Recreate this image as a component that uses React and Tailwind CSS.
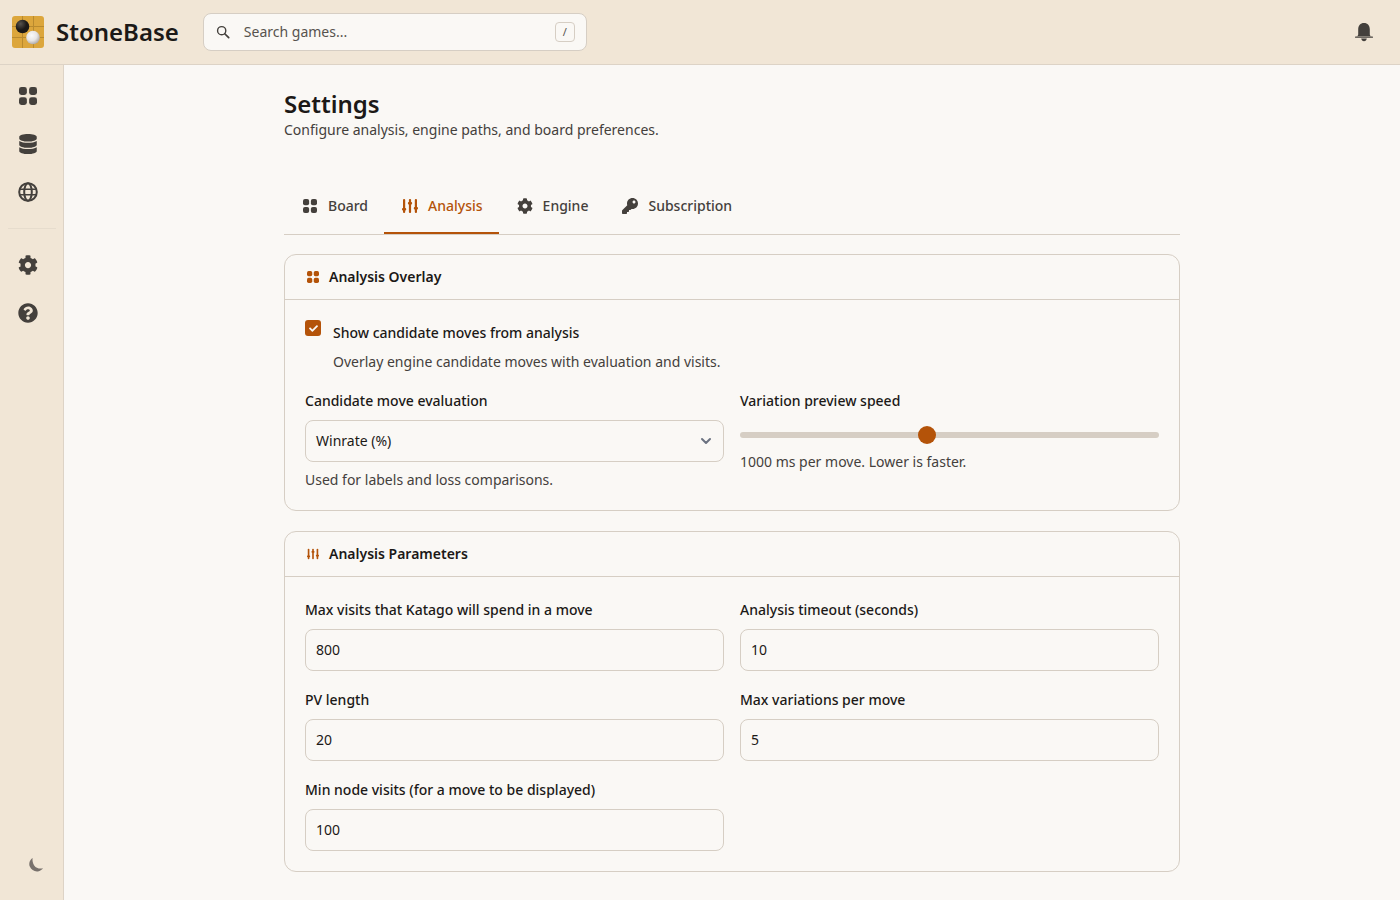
import { FaCheck, FaCog, FaDatabase, FaKey, FaQuestionCircle } from "react-icons/fa";

const Logo = () => (
  <svg width="32" height="32" viewBox="0 0 32 32">
    <defs>
      <radialGradient id="blackStone" cx="35%" cy="30%" r="75%">
        <stop offset="0%" stopColor="#57534e" />
        <stop offset="60%" stopColor="#1c1917" />
      </radialGradient>
      <radialGradient id="whiteStone" cx="40%" cy="35%" r="70%">
        <stop offset="0%" stopColor="#fafafa" />
        <stop offset="55%" stopColor="#e7e5e4" />
        <stop offset="100%" stopColor="#a8a29e" />
      </radialGradient>
    </defs>
    <rect x="0" y="0" width="32" height="32" rx="3" fill="#dca63c" />
    <path d="M0 10.5H32M0 21.5H32M10.5 0V32M21.5 0V32" stroke="#b98a2e" strokeWidth="1" />
    <circle cx="10.5" cy="10.5" r="6.8" fill="url(#blackStone)" />
    <circle cx="21" cy="21.5" r="6.8" fill="url(#whiteStone)" />
  </svg>
);

const GridIcon = ({ className }) => (
  <svg viewBox="0 0 16 16" fill="currentColor" className={className}>
    <rect x="0" y="0" width="7" height="7" rx="2.2" />
    <rect x="9" y="0" width="7" height="7" rx="2.2" />
    <rect x="0" y="9" width="7" height="7" rx="2.2" />
    <rect x="9" y="9" width="7" height="7" rx="2.2" />
  </svg>
);

const SlidersIcon = ({ className }) => (
  <svg viewBox="0 0 16 16" fill="currentColor" className={className}>
    <rect x="1" y="1" width="2.2" height="14" rx="1" />
    <rect x="6.9" y="1" width="2.2" height="14" rx="1" />
    <rect x="12.8" y="1" width="2.2" height="14" rx="1" />
    <rect x="0" y="10" width="4.2" height="2.4" rx="1" />
    <rect x="5.9" y="4" width="4.2" height="2.4" rx="1" />
    <rect x="11.8" y="9" width="4.2" height="2.4" rx="1" />
  </svg>
);

const GlobeIcon = ({ className }) => (
  <svg viewBox="0 0 20 20" fill="none" stroke="currentColor" strokeWidth="2" className={className}>
    <circle cx="10" cy="10" r="8.8" />
    <ellipse cx="10" cy="10" rx="3.8" ry="8.8" />
    <path d="M1.5 7.2H18.5M1.5 12.8H18.5" strokeWidth="1.6" />
  </svg>
);

const SearchIcon = ({ className }) => (
  <svg viewBox="0 0 16 16" fill="none" stroke="currentColor" strokeWidth="1.6" className={className}>
    <circle cx="6.5" cy="6.5" r="4.7" />
    <path d="M10 10L14.5 14.5" strokeWidth="2" strokeLinecap="round" />
  </svg>
);

const BellIcon = ({ className }) => (
  <svg viewBox="0 0 20 20" fill="currentColor" className={className}>
    <path d="M10 1C6.3 1 4.2 3.7 4.2 7.2V12.5C4.2 13.2 3.8 13.8 3 14.2H17C16.2 13.8 15.8 13.2 15.8 12.5V7.2C15.8 3.7 13.7 1 10 1Z" />
    <rect x="1" y="14.6" width="18" height="1.2" rx="0.6" />
    <path d="M7.2 16.6H12.8C12.6 18.2 11.4 19.2 10 19.2S7.4 18.2 7.2 16.6Z" />
  </svg>
);

const MoonIcon = ({ className }) => (
  <svg viewBox="0 0 16 16" fill="currentColor" className={className}>
    <path d="M4.6 1C1.7 3 0.6 6.4 1.8 9.6C3.2 13.2 7.2 15.2 10.8 14.2C12.4 13.8 14 12.6 15 11.2C11.8 12.2 8.2 11.2 6.2 8.4C4.8 6.2 4.2 3.6 4.6 1Z" />
  </svg>
);

const ChevronIcon = ({ className }) => (
  <svg viewBox="0 0 12 12" fill="none" stroke="currentColor" strokeWidth="2" strokeLinecap="round" strokeLinejoin="round" className={className}>
    <path d="M2 4L6 8L10 4" />
  </svg>
);

const Field = ({ label, value }) => (
  <div>
    <label className="block text-sm font-medium text-[#1c1917] leading-5 mb-[9px]">{label}</label>
    <input
      readOnly
      value={value}
      className="w-full h-[42px] px-[10px] pb-px text-sm text-[#1c1917] bg-[#faf8f5] border border-[#d6cec4] rounded-lg outline-none"
    />
  </div>
);

const tabs = [
  { name: "Board", Icon: GridIcon, iconClass: "w-[14px] h-[14px] mx-px" },
  { name: "Analysis", Icon: SlidersIcon, active: true, iconClass: "w-4 h-4" },
  { name: "Engine", Icon: FaCog, iconClass: "w-4 h-4" },
  { name: "Subscription", Icon: FaKey, iconClass: "w-4 h-4" },
];

export default function App() {
  return (
    <div className="h-[900px] overflow-hidden flex flex-col bg-[#faf8f5] text-[#1c1917] font-['Noto_Sans',sans-serif]">
      {/* TOP BAR */}
      <header className="h-[65px] shrink-0 flex items-center bg-[#f1e6d6] border-b border-[#ddd3c6] pl-3 pr-[26px]">
        <Logo />
        <span className="ml-3 text-2xl font-semibold">StoneBase</span>
        <div className="ml-6 w-[384px] h-[38px] flex items-center pl-3 pr-[11px] bg-[#faf8f5] border border-[#d6cec4] rounded-lg">
          <SearchIcon className="w-[14px] h-[14px] text-[#44403c]" />
          <span className="ml-[14px] text-sm text-[#57534e]">Search games...</span>
          <span className="ml-auto w-5 h-5 flex items-center justify-center border border-[#d6cec4] rounded text-[11px] text-[#57534e]">/</span>
        </div>
        <BellIcon className="ml-auto w-5 h-5 text-[#44403c]" />
      </header>

      <div className="flex-1 flex min-h-0">
        {/* SIDEBAR */}
        <aside className="w-16 shrink-0 flex flex-col items-center bg-[#f1e6d6] border-r border-[#ddd3c6] pr-2 pt-[22px] pb-[27px] text-[#44403c]">
          <GridIcon className="w-[18px] h-[18px]" />
          <FaDatabase className="mt-[29px] text-xl" />
          <GlobeIcon className="mt-7 w-5 h-5" />
          <div className="w-12 ml-2 h-px bg-[#e6dccd] mt-[26px]" />
          <FaCog className="mt-[26px] text-xl" />
          <FaQuestionCircle className="mt-7 text-xl" />
          <MoonIcon className="mt-auto ml-4 w-4 h-4 text-[#78716c]" />
        </aside>

        {/* MAIN */}
        <main className="flex-1 px-[220px] pt-[23px]">
          <h1 className="text-2xl font-semibold leading-8">Settings</h1>
          <p className="text-sm text-[#44403c] leading-5">Configure analysis, engine paths, and board preferences.</p>

          <div className="mt-[38px] flex border-b border-[#d6cec4]">
            {tabs.map(({ name, Icon, active, iconClass }) => (
              <div
                key={name}
                className={
                  active
                    ? "h-14 flex items-center gap-[10px] pl-[18px] pr-4 pt-[2px] text-sm font-medium text-[#b45309] border-b-2 border-[#b45309] -mb-px"
                    : "h-14 flex items-center gap-[10px] pl-[18px] pr-4 text-sm font-medium text-[#44403c]"
                }
              >
                <Icon className={iconClass} />
                {name}
              </div>
            ))}
          </div>

          <section className="mt-[19px] border border-[#d6cec4] rounded-xl">
            <div className="h-[45px] flex items-center gap-[10px] pl-[22px] px-5 border-b border-[#d6cec4] text-sm font-semibold">
              <GridIcon className="w-3 h-3 text-[#b45309]" />
              Analysis Overlay
            </div>
            <div className="p-5">
              <div className="flex gap-3">
                <span className="w-4 h-4 flex items-center justify-center rounded-[3px] bg-[#b45309] text-[#faf8f5] text-[9px]">
                  <FaCheck />
                </span>
                <div className="mt-[3px]">
                  <div className="text-sm font-medium leading-5">Show candidate moves from analysis</div>
                  <div className="mt-[9px] text-sm text-[#44403c] leading-5">Overlay engine candidate moves with evaluation and visits.</div>
                </div>
              </div>
              <div className="mt-[19px] grid grid-cols-2 gap-4">
                <div>
                  <div className="text-sm font-medium leading-5 mb-[9px]">Candidate move evaluation</div>
                  <div className="h-[42px] flex items-center justify-between pl-[10px] pr-[11px] text-sm bg-[#faf8f5] border border-[#d6cec4] rounded-lg">
                    Winrate (%)
                    <ChevronIcon className="w-3 h-3 text-[#6b7280]" />
                  </div>
                  <div className="mt-2 text-sm text-[#44403c] leading-5">Used for labels and loss comparisons.</div>
                </div>
                <div>
                  <div className="text-sm font-medium leading-5">Variation preview speed</div>
                  <div className="relative mt-[21px] h-[6px] rounded-full bg-[#d6cec4]">
                    <span className="absolute left-[178px] top-[-6px] w-[18px] h-[18px] rounded-full bg-[#b45309]" />
                  </div>
                  <div className="mt-[14px] text-sm text-[#44403c] leading-5">1000 ms per move. Lower is faster.</div>
                </div>
              </div>
            </div>
          </section>

          <section className="mt-5 border border-[#d6cec4] rounded-xl">
            <div className="h-[45px] flex items-center gap-[10px] pl-[22px] px-5 border-b border-[#d6cec4] text-sm font-semibold">
              <SlidersIcon className="w-3 h-3 text-[#b45309]" />
              Analysis Parameters
            </div>
            <div className="px-5 pt-[23px] pb-5 grid grid-cols-2 gap-x-4 gap-y-[19px]">
              <Field label="Max visits that Katago will spend in a move" value="800" />
              <Field label="Analysis timeout (seconds)" value="10" />
              <Field label="PV length" value="20" />
              <Field label="Max variations per move" value="5" />
              <Field label="Min node visits (for a move to be displayed)" value="100" />
            </div>
          </section>
        </main>
      </div>
    </div>
  );
}
